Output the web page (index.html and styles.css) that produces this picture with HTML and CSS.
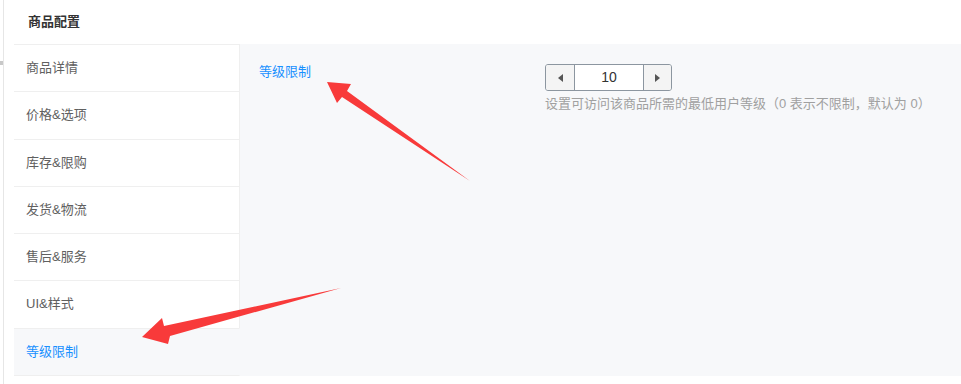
FILE: index.html
```html
<!DOCTYPE html>
<html lang="zh-CN">
<head>
    <meta charset="UTF-8">
    <meta name="viewport" content="width=device-width, initial-scale=1.0">
    <title>商品配置</title>
    <link rel="stylesheet" href="styles.css">
</head>
<body>
    <div class="page">
        <span class="edge-mark"></span>
        <div class="title">商品配置</div>
        <div class="config">
            <ul class="tabs">
                <li class="tab">商品详情</li>
                <li class="tab">价格&amp;选项</li>
                <li class="tab">库存&amp;限购</li>
                <li class="tab">发货&amp;物流</li>
                <li class="tab">售后&amp;服务</li>
                <li class="tab">UI&amp;样式</li>
                <li class="tab active">等级限制</li>
            </ul>
            <div class="content">
                <div class="form-row">
                    <div class="label">等级限制</div>
                    <div class="field">
                        <div class="stepper">
                            <div class="step-btn"><span class="tri tri-left"></span></div>
                            <div class="step-value">10</div>
                            <div class="step-btn step-right"><span class="tri tri-right"></span></div>
                        </div>
                        <div class="hint">设置可访问该商品所需的最低用户等级（0 表示不限制，默认为 0）</div>
                    </div>
                </div>
            </div>
        </div>

        <!-- 标注箭头 -->
        <svg class="marks" width="961" height="384" viewBox="0 0 961 384">
            <polygon points="327,82 351,84 347,91 470,181 342,97 337,103" fill="#f83a3a"/>
            <polygon points="142,337 162,318 164,326 341,288 170,336 168,344" fill="#f83a3a"/>
        </svg>
    </div>
</body>
</html>
```

FILE: styles.css
```css
*{
    box-sizing: border-box;
}
body{
    margin: 0;
    background-color: #fff;
    font-family: "Liberation Sans", "Noto Sans CJK SC", sans-serif;
    font-size: 13px;
    color: #666;
    overflow: hidden;
}
.page{
    position: relative;
    width: 958px;
    height: 384px;
    margin-left: 3px;
    border-left: 1px solid #e6e6e6;
}
.edge-mark{
    position: absolute;
    left: -4px;
    top: 61px;
    width: 3px;
    height: 4px;
    background-color: #c8c8c8;
}
.title{
    height: 44px;
    line-height: 44px;
    padding-left: 24px;
    font-weight: bold;
    color: #333;
}
.config{
    display: flex;
    margin-left: 10px;
}
.tabs{
    list-style: none;
    margin: 0;
    padding: 0;
    width: 226px;
}
.tab{
    height: 47.3px;
    line-height: 46.3px;
    padding-left: 12px;
    border-top: 1px solid #efefef;
    border-right: 1px solid #efefef;
    color: #606060;
}
.tab:last-child{
    border-bottom: 1px solid #efefef;
    height: 48.3px;
}
.tab.active{
    background-color: #f7f8fa;
    border-right-color: #f7f8fa;
    color: #1890ff;
}
.content{
    flex: 1;
    height: 332px;
    background-color: #f7f8fa;
    padding: 20px 0 0 19px;
}
.form-row{
    display: flex;
}
.label{
    width: 286px;
    line-height: 16px;
    color: #1890ff;
}
.stepper{
    display: flex;
    width: 127px;
    height: 27px;
    border: 1px solid #8c96a0;
    border-radius: 3px;
    overflow: hidden;
}
.step-btn{
    width: 29px;
    display: flex;
    align-items: center;
    justify-content: center;
    background-color: #f4f4f4;
    border-right: 1px solid #8c96a0;
}
.step-right{
    width: 28px;
    border-right: none;
    border-left: 1px solid #8c96a0;
}
.step-value{
    flex: 1;
    background-color: #fff;
    text-align: center;
    line-height: 25px;
    font-size: 14px;
    color: #333;
}
.tri{
    width: 0;
    height: 0;
    border-top: 4px solid transparent;
    border-bottom: 4px solid transparent;
}
.tri-left{
    border-right: 5px solid #555;
}
.tri-right{
    border-left: 5px solid #555;
}
.hint{
    margin-top: 5px;
    line-height: 16px;
    color: #a0a0a0;
}
.marks{
    position: absolute;
    left: -4px;
    top: 0;
    pointer-events: none;
}
```
